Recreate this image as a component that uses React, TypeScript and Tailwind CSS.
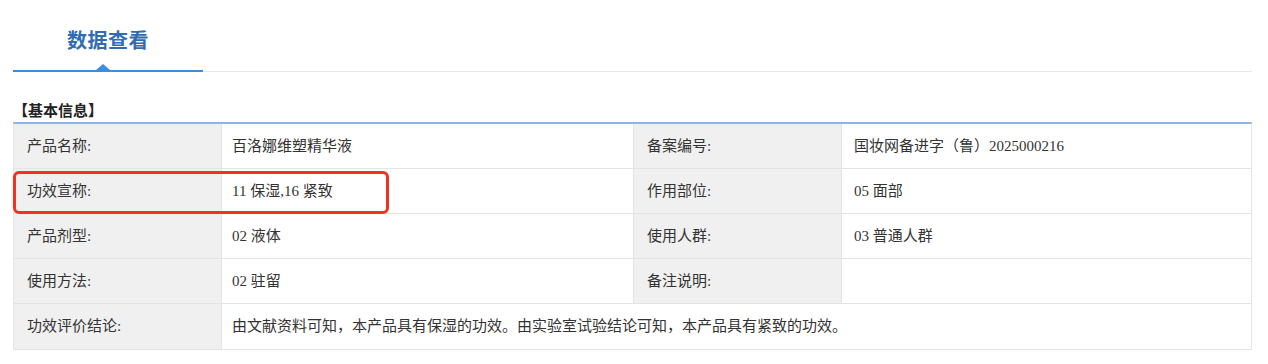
import React from 'react';

// Basic info view: tab header + 2-column key/value table
type Cell = { label: string; value: string };

const rows: Cell[][] = [
  [
    { label: '产品名称:', value: '百洛娜维塑精华液' },
    { label: '备案编号:', value: '国妆网备进字（鲁）2025000216' },
  ],
  [
    { label: '功效宣称:', value: '11 保湿,16 紧致' },
    { label: '作用部位:', value: '05 面部' },
  ],
  [
    { label: '产品剂型:', value: '02 液体' },
    { label: '使用人群:', value: '03 普通人群' },
  ],
  [
    { label: '使用方法:', value: '02 驻留' },
    { label: '备注说明:', value: '' },
  ],
];

const font = 'font-["Liberation_Serif","Noto_Sans_CJK_SC",serif]';

const TabHeader: React.FC = () => (
  <div>
    <div className="flex h-[70px] w-[190px] items-center justify-center pt-[10px]">
      <span className="font-['Noto_Sans_CJK_SC',sans-serif] text-[20px] font-semibold tracking-[0.5px] text-[#2f6cb3]">
        数据查看
      </span>
    </div>
    <div className="relative flex items-start">
      <div className="h-[2px] w-[190px] bg-[#3a8ee0]" />
      <div className="mt-[0.5px] h-[1.5px] flex-1 bg-[#e8e8e8]" />
      {/* little pointer above the active tab */}
      <div className="absolute bottom-[2px] left-[83px] h-0 w-0 border-x-[7px] border-b-[6px] border-x-transparent border-b-[#3a8ee0]" />
    </div>
  </div>
);

const InfoRow: React.FC<{ cells: Cell[] }> = ({ cells }) => (
  <div className="flex h-[45px] border-b border-[#e4e4e4] text-[15px] text-[#333]">
    {cells.map((c, i) => (
      <React.Fragment key={i}>
        <div className="flex w-[208px] shrink-0 items-center border-r border-[#e4e4e4] bg-[#f0f0f0] pl-[13px]">
          {c.label}
        </div>
        <div
          className={
            i === 0
              ? 'flex w-[412px] shrink-0 items-center border-r border-[#e4e4e4] pl-[10px]'
              : 'flex flex-1 items-center pl-[12px]'
          }
        >
          {c.value}
        </div>
      </React.Fragment>
    ))}
  </div>
);

export default function App() {
  return (
    <div className={`h-[364px] w-full bg-white pl-[13px] pr-[16px] ${font}`}>
      <TabHeader />

      <div className="mt-[29px] text-[15px] font-bold leading-[20px] text-[#222]">【基本信息】</div>

      <div className="relative mt-[1px] border-x border-b border-t-2 border-[#e4e4e4] border-t-[#8cb4e8]">
        {rows.map((r, i) => (
          <InfoRow key={i} cells={r} />
        ))}
        <div className="flex h-[45px] text-[15px] text-[#333]">
          <div className="flex w-[208px] shrink-0 items-center border-r border-[#e4e4e4] bg-[#f0f0f0] pl-[13px]">
            功效评价结论:
          </div>
          <div className="flex flex-1 items-center pl-[10px]">
            由文献资料可知，本产品具有保湿的功效。由实验室试验结论可知，本产品具有紧致的功效。
          </div>
        </div>

        {/* red highlight annotation */}
        <div className="pointer-events-none absolute left-[-1px] top-[47px] h-[43px] w-[376px] rounded-[6px] border-[3px] border-[#f5301f]" />
      </div>
    </div>
  );
}
